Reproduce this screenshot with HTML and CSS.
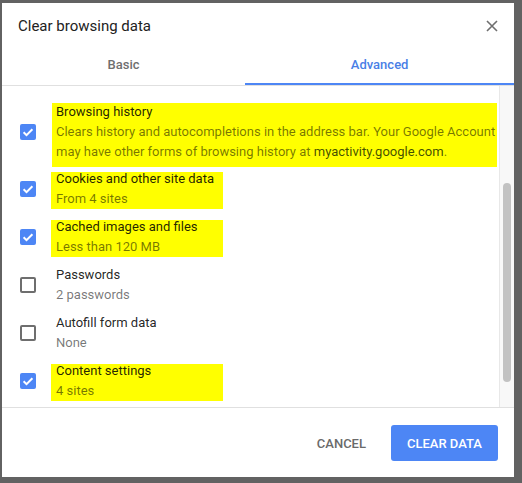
FILE: index.html
```
<!DOCTYPE html>
<html>
<head>
<meta charset="utf-8">
<link rel="stylesheet" href="styles.css">
</head>
<body>
<div class="dialog">
  <div class="header">
    <div class="title">Clear browsing data</div>
    <svg class="close" width="12" height="12" viewBox="0 0 12 12"><path d="M1 1L11 11M11 1L1 11" stroke="#6f6f6f" stroke-width="1.6" fill="none"/></svg>
  </div>
  <div class="tabs">
    <div class="tab">Basic</div>
    <div class="tab active">Advanced</div>
  </div>
  <div class="content">
    <div class="list">
      <div class="item first">
        <span class="cb checked"><svg width="16" height="16" viewBox="0 0 16 16"><path d="M3.6 8.3L6.5 11.1L12.4 5.2" stroke="#fff" stroke-width="2" fill="none"/></svg></span>
        <div class="text hl wide">
          <div class="label">Browsing history</div>
          <div class="sub">Clears history and autocompletions in the address bar. Your Google Account<br>may have other forms of browsing history at <span class="link">myactivity.google.com</span>.</div>
        </div>
      </div>
      <div class="item">
        <span class="cb checked"><svg width="16" height="16" viewBox="0 0 16 16"><path d="M3.6 8.3L6.5 11.1L12.4 5.2" stroke="#fff" stroke-width="2" fill="none"/></svg></span>
        <div class="text hl short">
          <div class="label">Cookies and other site data</div>
          <div class="sub">From 4 sites</div>
        </div>
      </div>
      <div class="item">
        <span class="cb checked"><svg width="16" height="16" viewBox="0 0 16 16"><path d="M3.6 8.3L6.5 11.1L12.4 5.2" stroke="#fff" stroke-width="2" fill="none"/></svg></span>
        <div class="text hl short">
          <div class="label">Cached images and files</div>
          <div class="sub">Less than 120 MB</div>
        </div>
      </div>
      <div class="item">
        <span class="cb"></span>
        <div class="text">
          <div class="label">Passwords</div>
          <div class="sub">2 passwords</div>
        </div>
      </div>
      <div class="item">
        <span class="cb"></span>
        <div class="text">
          <div class="label">Autofill form data</div>
          <div class="sub">None</div>
        </div>
      </div>
      <div class="item">
        <span class="cb checked"><svg width="16" height="16" viewBox="0 0 16 16"><path d="M3.6 8.3L6.5 11.1L12.4 5.2" stroke="#fff" stroke-width="2" fill="none"/></svg></span>
        <div class="text hl short">
          <div class="label">Content settings</div>
          <div class="sub">4 sites</div>
        </div>
      </div>
    </div>
    <div class="track"><div class="thumb"></div></div>
  </div>
  <div class="footer">
    <button class="btn cancel">CANCEL</button>
    <button class="btn primary">CLEAR DATA</button>
  </div>
</div>
</body>
</html>
```
FILE: styles.css
```
html, body {
  margin: 0;
  padding: 0;
}
body {
  background: #626262;
  font-family: Roboto, "Liberation Sans", sans-serif;
  width: 522px;
  height: 483px;
  overflow: hidden;
}
.dialog {
  margin: 3px 0 0 2px;
  width: 512px;
  height: 474px;
  background: #fff;
  display: flex;
  flex-direction: column;
  box-sizing: border-box;
}
.header {
  height: 40px;
  padding: 0 16px;
  display: flex;
  align-items: center;
  justify-content: space-between;
  box-sizing: border-box;
  padding-top: 5px;
  flex: none;
}
.title {
  font-size: 15px;
  line-height: 20px;
  color: #222;
}
.close {
  display: block;
}
.tabs {
  display: flex;
  height: 43px;
  border-bottom: 1px solid #e0e0e0;
  box-sizing: border-box;
  flex: none;
}
.tab {
  flex: 1 1 auto;
  display: flex;
  align-items: center;
  justify-content: center;
  font-size: 13px;
  font-weight: 500;
  color: #6f6f6f;
  border-bottom: 2px solid transparent;
  padding-top: 2px;
  box-sizing: border-box;
}
.tab.active {
  color: #4a7fe6;
  border-bottom-color: #4d86f5;
}
.content {
  height: 322px;
  flex: none;
  display: flex;
  border-bottom: 1px solid #e0e0e0;
  box-sizing: border-box;
}
.list {
  flex: 1;
  min-width: 0;
  overflow: hidden;
  padding-top: 13px;
  padding-right: 2px;
}
.item {
  display: flex;
  align-items: center;
  min-height: 48px;
  padding: 3px 0;
  box-sizing: border-box;
}
.cb {
  flex: none;
  width: 16px;
  height: 16px;
  margin-left: 18px;
  border: 2px solid #6e6e6e;
  border-radius: 2px;
  box-sizing: border-box;
  display: flex;
  align-items: center;
  justify-content: center;
}
.cb.checked {
  border: none;
  background: #4d86f5;
}
.cb svg {
  display: block;
}
.text {
  margin-left: 20px;
  font-size: 13px;
  line-height: 20px;
  white-space: nowrap;
}
.hl {
  background: linear-gradient(#ffff00, #ffff00) 0 3px / 100% calc(100% - 2px) no-repeat;
}
.hl.wide {
  flex: 1;
  min-width: 0;
  margin-left: 16px;
  padding: 0 4px 5px 4px;
  margin-bottom: -5px;
  background: linear-gradient(#ffff00, #ffff00) 0 1px / 100% 100% no-repeat;
}
.hl.short {
  width: 172px;
  box-sizing: border-box;
  margin-left: 15px;
  padding-left: 5px;
}
.label {
  color: rgba(0, 0, 0, 0.87);
}
.sub {
  color: rgba(0, 0, 0, 0.54);
}
.link {
  color: rgba(20, 40, 0, 0.82);
}
.track {
  flex: none;
  width: 15px;
  background: #f8f8f8;
  border-left: 1px solid #e8e8e8;
  box-sizing: border-box;
  padding: 97px 3px 0 3px;
}
.thumb {
  width: 8px;
  height: 199px;
  border-radius: 4px;
  background: #c2c2c2;
}
.footer {
  flex: 1;
  display: flex;
  justify-content: flex-end;
  align-items: flex-start;
  gap: 9px;
  padding: 17px 16px 0 16px;
}
.btn {
  font-family: Roboto, "Liberation Sans", sans-serif;
  font-size: 13px;
  font-weight: 500;
  height: 36px;
  padding: 0 16px;
  border: none;
  border-radius: 3px;
  cursor: pointer;
  white-space: nowrap;
}
.cancel {
  background: transparent;
  color: #6a6a6a;
}
.primary {
  background: #4d86f5;
  color: #fff;
}
```
